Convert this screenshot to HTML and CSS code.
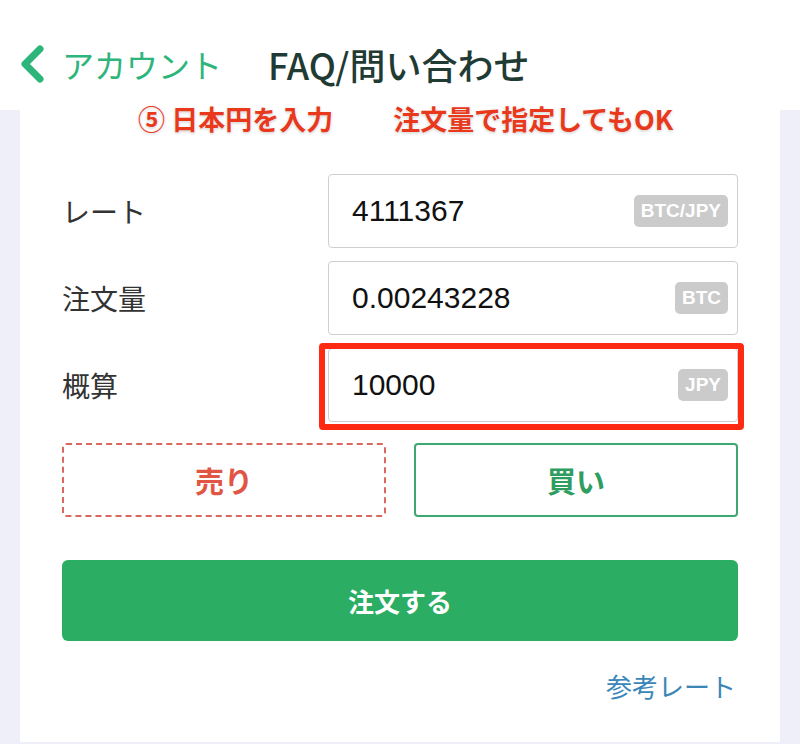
FILE: index.html
```html
<!DOCTYPE html>
<html lang="ja">
<head>
<meta charset="UTF-8">
<meta name="viewport" content="width=device-width, initial-scale=1.0">
<title>注文</title>
<link rel="stylesheet" href="styles.css">
</head>
<body>

<div class="header">
    <a class="back" href="#">
        <svg class="chevron" width="28" height="38" viewBox="0 0 28 38">
            <path d="M22 4 L7 19 L22 34" fill="none" stroke="#2db57c" stroke-width="7" stroke-linecap="round" stroke-linejoin="round"/>
        </svg>
        <span>アカウント</span>
    </a>
    <h1 class="title">FAQ/問い合わせ</h1>
</div>

<div class="page">
    <div class="card">
        <p class="note"><span>⑤ 日本円を入力</span><span>注文量で指定してもOK</span></p>

        <div class="row">
            <label>レート</label>
            <div class="field">
                <span class="value">4111367</span>
                <span class="unit">BTC/JPY</span>
            </div>
        </div>
        <div class="row">
            <label>注文量</label>
            <div class="field">
                <span class="value">0.00243228</span>
                <span class="unit">BTC</span>
            </div>
        </div>
        <div class="row">
            <label>概算</label>
            <div class="field marked">
                <span class="value">10000</span>
                <span class="unit">JPY</span>
            </div>
        </div>

        <div class="sides">
            <button class="side sell">売り</button>
            <button class="side buy">買い</button>
        </div>

        <button class="order">注文する</button>

        <div class="ref"><a href="#">参考レート</a></div>
    </div>
</div>

</body>
</html>
```

FILE: styles.css
```css
body {
    margin: 0;
    font-family: "Noto Sans CJK JP", "Liberation Sans", sans-serif;
    background-color: #fff;
    width: 800px;
    height: 744px;
    overflow: hidden;
}

.header {
    height: 110px;
    display: flex;
    align-items: center;
    padding: 18px 0 0 18px;
    box-sizing: border-box;
}

.back {
    display: flex;
    align-items: center;
    gap: 16px;
    text-decoration: none;
    color: #2db57c;
    font-size: 32px;
}

.title {
    margin: 0 0 0 46px;
    font-size: 36px;
    font-weight: 500;
    color: #1f3b34;
}

.page {
    background-color: #eeeff8;
    padding: 0 20px 2px;
    height: 634px;
    box-sizing: border-box;
}

.card {
    position: relative;
    background-color: #fff;
    height: 632px;
    padding: 64px 42px 0;
    box-sizing: border-box;
}

/* annotation laid over the screenshot */
.note {
    position: absolute;
    top: -11px;
    left: 118px;
    margin: 0;
    display: flex;
    gap: 60px;
    font-size: 27px;
    font-weight: bold;
    color: #e8391d;
    text-shadow: 0 0 2px #fff, 0 1px 3px rgba(0, 0, 0, 0.25);
}

.row {
    display: flex;
    align-items: center;
    height: 74px;
    margin-bottom: 13px;
}

.row label {
    width: 266px;
    font-size: 28px;
    color: #333;
}

.field {
    position: relative;
    flex: 1;
    height: 74px;
    border: 1px solid #cfcfcf;
    border-radius: 4px;
    display: flex;
    align-items: center;
    justify-content: space-between;
    padding: 0 9px 0 23px;
    box-sizing: border-box;
}

.field .value {
    font-family: "Liberation Sans", sans-serif;
    font-size: 30px;
    color: #111;
}

.field .unit {
    background-color: #cbcbcb;
    color: #fff;
    font-family: "Liberation Sans", sans-serif;
    font-weight: bold;
    font-size: 19px;
    padding: 5px 7px;
    border-radius: 5px;
    line-height: 22px;
}

.field.marked::after {
    content: "";
    position: absolute;
    top: -6px;
    left: -10px;
    right: -7px;
    bottom: -9px;
    border: 6px solid #ff2a12;
    border-radius: 4px;
}

.sides {
    display: flex;
    gap: 28px;
    margin-top: 21px;
}

.side {
    flex: 1;
    height: 74px;
    background-color: #fff;
    border-radius: 4px;
    font-family: "Noto Sans CJK JP", sans-serif;
    font-size: 29px;
    font-weight: bold;
}

.sell {
    border: 2px dashed #d9685f;
    color: #e05544;
}

.buy {
    border: 2px solid #3fa771;
    color: #2f9d5f;
}

.order {
    display: block;
    width: 100%;
    height: 81px;
    margin-top: 43px;
    background-color: #2bae63;
    border: none;
    border-radius: 6px;
    color: #fff;
    font-family: "Noto Sans CJK JP", sans-serif;
    font-size: 26px;
    font-weight: bold;
}

.ref {
    text-align: right;
    margin-top: 26px;
    padding-right: 2px;
}

.ref a {
    color: #3a86b8;
    font-size: 26px;
    text-decoration: none;
}
```
